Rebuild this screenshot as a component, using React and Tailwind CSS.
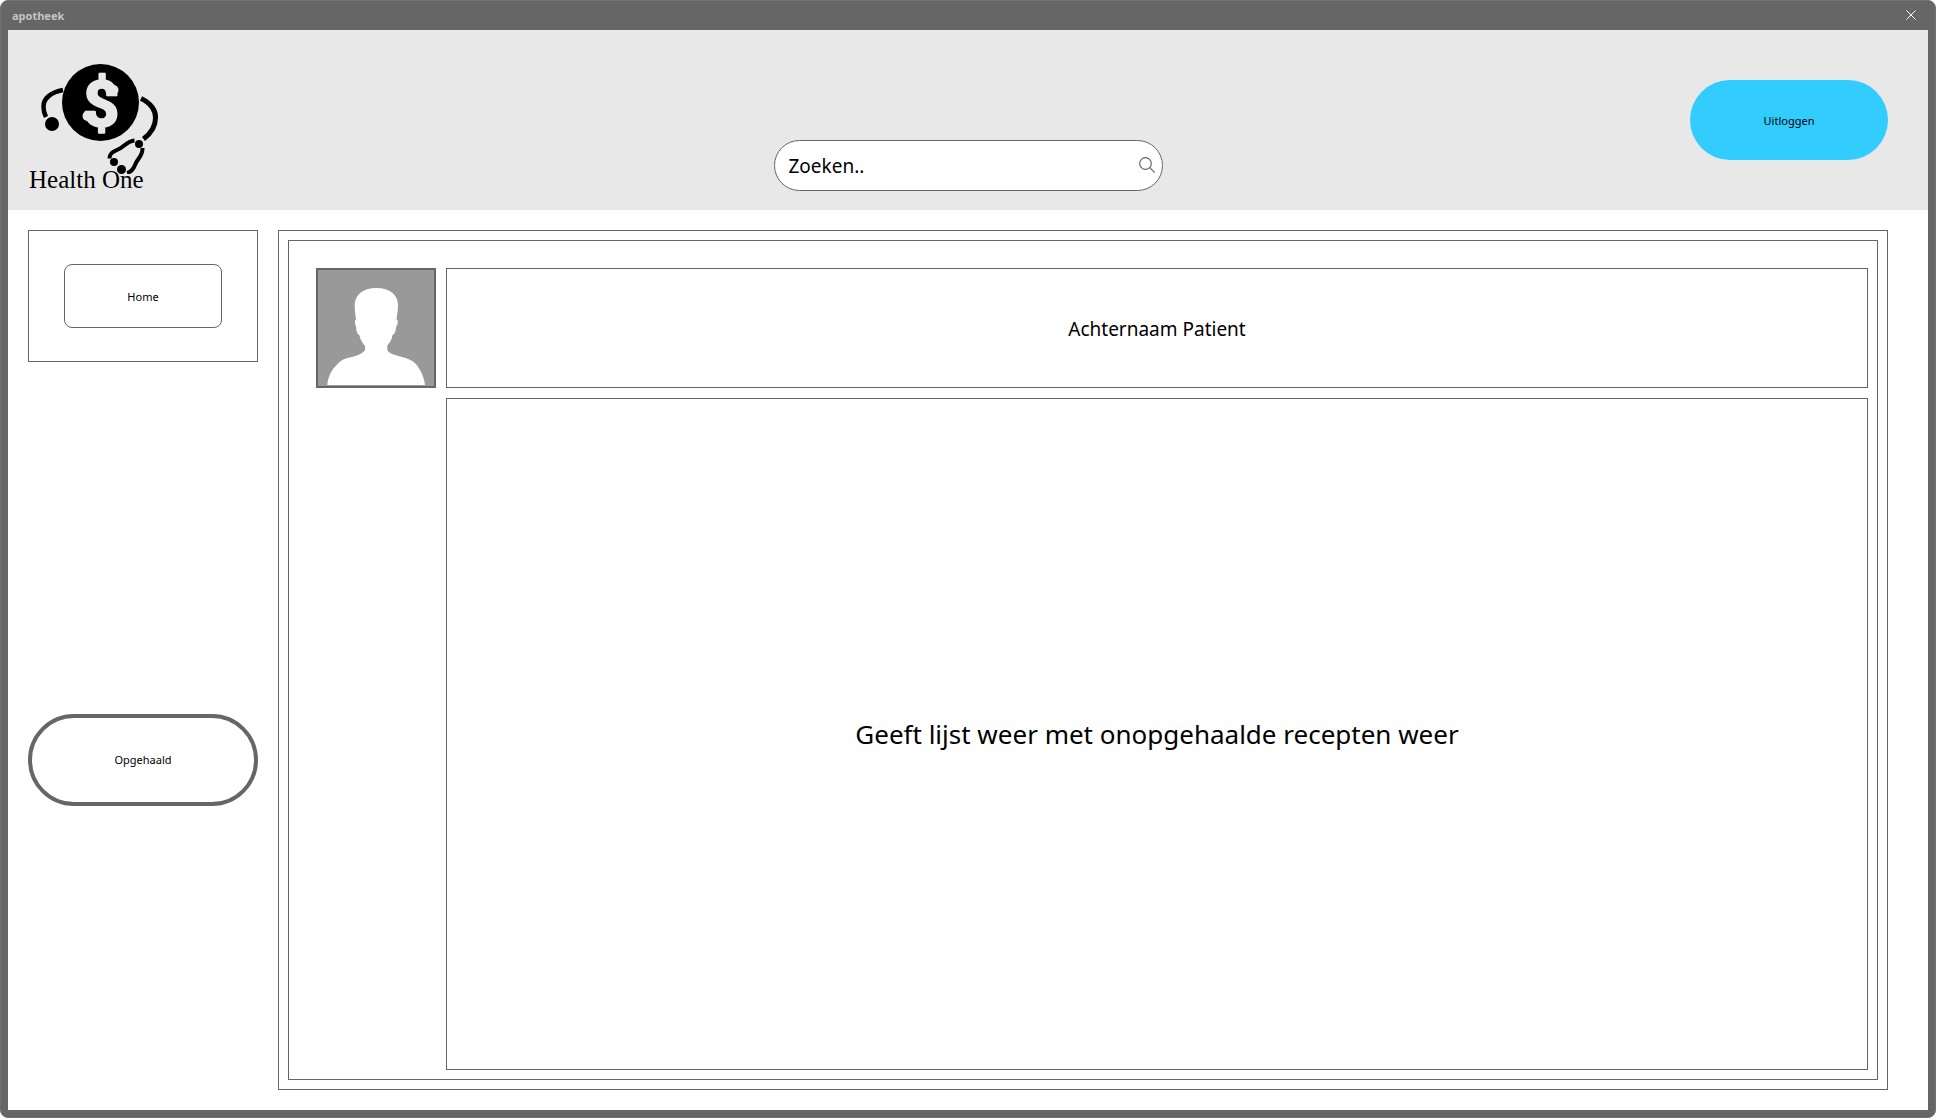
function Logo() {
  return (
    <div className="w-36 text-black">
      <svg viewBox="20 60 144 114" className="block h-[114px] w-36" aria-hidden="true">
        <circle cx="100.5" cy="102.5" r="38.5" />
        <text
          x="101"
          y="126"
          textAnchor="middle"
          fontSize="63"
          fontWeight="700"
          fill="#e8e8e8"
          stroke="#e8e8e8"
          strokeWidth="2.5"
          strokeLinejoin="round"
          className="font-[Roboto,sans-serif]"
        >
          $
        </text>
        <circle cx="113.5" cy="90" r="5" fill="#e8e8e8" />
        <circle cx="87.5" cy="116" r="5" fill="#e8e8e8" />
        <g fill="none" stroke="#000" strokeWidth="4.5">
          <path d="M63 90C52 92 43 98 43.500 107C43.500 111 44.500 114 46 117" />
          <path d="M141 98.500C151 103 156 111 155.500 118C155.500 127 150 134 143.500 139" strokeWidth="5" />
          <path d="M134.500 140.500C127 141 124 147 118 149.500C113 152 109.500 153 109.500 158.500" strokeWidth="4" />
          <path d="M142.500 148C143 156 137 159 135 165C133 170 131 172 127 173" strokeWidth="4" />
        </g>
        <circle cx="52" cy="124" r="7" />
        <circle cx="139" cy="144" r="4" />
        <circle cx="114" cy="162" r="4" />
        <circle cx="121.500" cy="169.500" r="4.500" />
      </svg>
      <p className="-mt-2 pl-[9px] font-['Liberation_Serif',serif] text-[25px] leading-7 whitespace-nowrap">
        Health One
      </p>
    </div>
  );
}

function Avatar() {
  return (
    <div className="size-[120px] shrink-0 border-2 border-[#666] bg-[#999]">
      <svg viewBox="2 2 116 116" className="block size-full" role="img" aria-label="Patient">
        <path
          fill="#fff"
          d="M60.500 20C47 20 38.700 27 38.700 37C38.700 43 39.500 47 40 51.500C38.500 51.500 38.700 56 40 58C40.200 63 41 66 43.300 67C44.500 72 46.500 75 49 78V82C47 85 43 87 38 88.500C32 89.500 26 91 22 95.500C16 101 12 108 11.300 117H109C108 109 105 103 100.700 97C97 92 90 90 84 88.500C79 87 73 85.500 71.300 82V77.500C74 75 76 71 76.500 67C79 66 79.700 63 80 59C82 57 82.500 51.500 80.500 51.500C81 47 82 43 82 37C82 27 74 20 60.500 20Z"
        />
      </svg>
    </div>
  );
}

export default function App() {
  return (
    <div className="flex min-h-screen flex-col rounded-lg border border-[#707070] bg-[#666] px-[7px] pb-[7px] font-['Noto_Sans',sans-serif] text-[11px] text-black">
      <div className="flex h-[29px] shrink-0 items-center justify-between pr-3 pl-1">
        <h1 className="pt-0.5 font-bold text-[#c4c4c4]">apotheek</h1>
        <button type="button" aria-label="Sluiten" className="pb-0.5 text-white">
          <svg viewBox="0 0 10 10" className="block size-[10px]" fill="none" stroke="currentColor">
            <path d="M.5.5l9 9M9.500.5l-9 9" />
          </svg>
        </button>
      </div>

      <header className="grid h-[180px] shrink-0 grid-cols-[1fr_389px_1fr] bg-[#e8e8e8] pr-10 pl-3">
        <div className="pt-[30px]">
          <Logo />
        </div>
        <form className="ml-3.5 -mr-3.5 mb-[19px] flex h-[51px] items-center self-end rounded-full border border-[#666] bg-white pr-1.5 pl-3.5">
          <input
            type="text"
            aria-label="Zoeken"
            placeholder="Zoeken.."
            className="min-w-0 flex-1 pt-0.5 text-[19px] outline-none placeholder:text-black placeholder:opacity-100"
          />
          <button type="button" aria-label="Zoek" className="pb-0.5">
            <svg viewBox="0 0 18 18" className="block size-[18px]" fill="none" stroke="#666" strokeWidth="1.2">
              <circle cx="7.500" cy="7.500" r="5.800" />
              <path d="M11.700 11.700l5 5" />
            </svg>
          </button>
        </form>
        <button type="button" className="mt-[50px] h-20 w-[198px] justify-self-end rounded-full bg-[#3cf] pt-0.5">
          Uitloggen
        </button>
      </header>

      <div className="flex flex-1 gap-5 bg-white py-5 pr-10 pl-5">
        <aside className="flex w-[230px] shrink-0 flex-col">
          <nav className="border border-[#666] px-[35px] py-[33px]">
            <button type="button" className="h-16 w-full rounded-lg border border-[#666] pt-0.5">
              Home
            </button>
          </nav>
          <div className="flex flex-1 flex-col justify-center pt-[68px]">
            <button type="button" className="h-[92px] w-full rounded-full border-4 border-[#666]">
              Opgehaald
            </button>
          </div>
        </aside>

        <main className="flex flex-1 border border-[#666] p-[9px]">
          <section className="flex flex-1 gap-2.5 border border-[#666] pt-[27px] pr-[9px] pb-[9px] pl-[27px]">
            <Avatar />
            <div className="flex flex-1 flex-col gap-2.5">
              <div className="flex h-[120px] items-center justify-center border border-[#666]">
                <h2 className="pt-0.5 text-[19px]">Achternaam Patient</h2>
              </div>
              <div className="flex flex-1 items-center justify-center border border-[#666]">
                <p className="text-[26px]">Geeft lijst weer met onopgehaalde recepten weer</p>
              </div>
            </div>
          </section>
        </main>
      </div>
    </div>
  );
}
